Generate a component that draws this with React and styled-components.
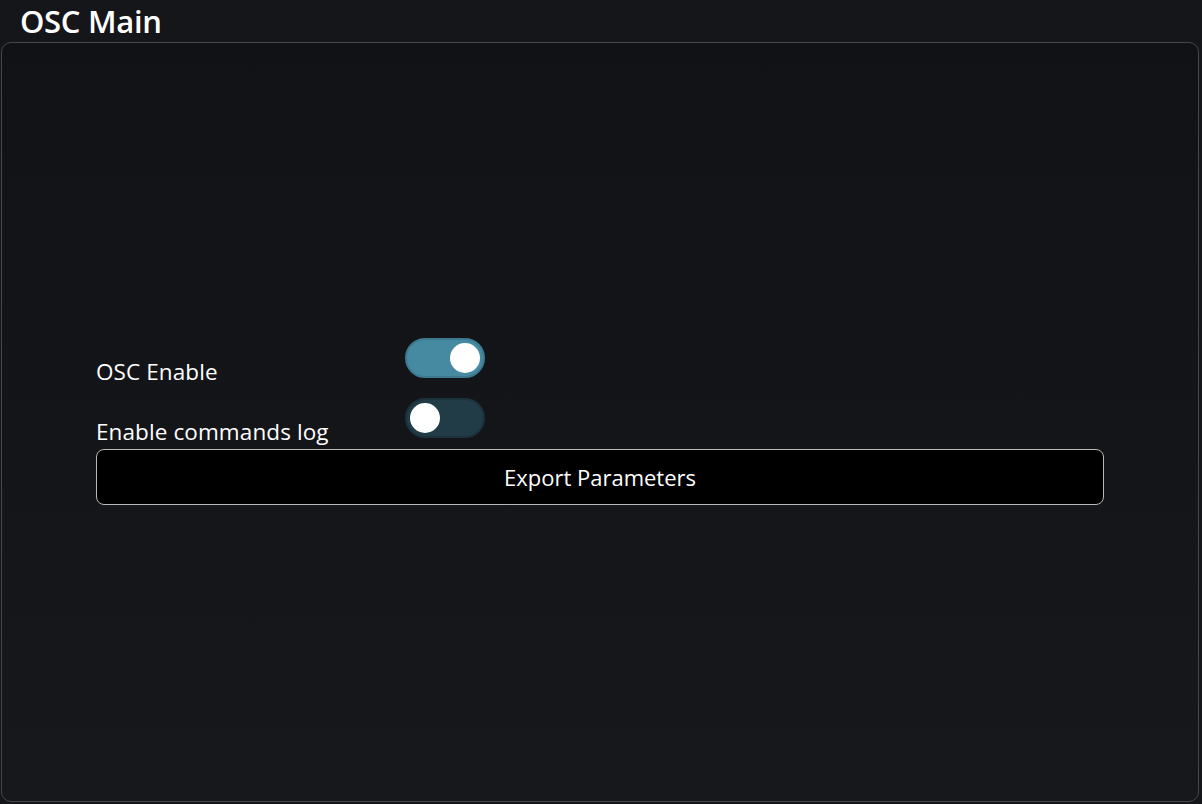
import React, { useState } from "react";
import styled, { createGlobalStyle } from "styled-components";

const GlobalStyle = createGlobalStyle`
  html, body {
    margin: 0;
    padding: 0;
    background: #15161a;
    font-family: "Open Sans", "Noto Sans", sans-serif;
    color: #ffffff;
  }
`;

const Page = styled.div`
  display: flex;
  flex-direction: column;
  width: 1202px;
  height: 804px;
  box-sizing: border-box;
  padding: 0 3px 2px 1px;
  background: #15161a;
`;

const Title = styled.h1`
  margin: 0;
  padding: 0 0 0 19px;
  height: 42px;
  line-height: 42px;
  font-size: 31px;
  font-weight: 600;
  letter-spacing: -0.3px;
`;

const Panel = styled.section`
  flex: 1;
  display: flex;
  flex-direction: column;
  justify-content: center;
  padding: 0 94px;
  border: 1px solid #46474b;
  border-radius: 10px;
  background: linear-gradient(180deg, #111216 0%, #17181c 100%);
`;

const Settings = styled.div`
  display: flex;
  flex-direction: column;
  margin-top: -2px;
`;

const Row = styled.div`
  display: flex;
  align-items: flex-start;
  height: 40px;
  margin-bottom: 20px;
  &:last-child {
    margin-bottom: 11px;
  }
`;

const Label = styled.span`
  width: 309px;
  font-size: 22.5px;
  line-height: 28px;
  padding-top: 20px;
  letter-spacing: 0.1px;
`;

const Track = styled.button`
  position: relative;
  width: 80px;
  height: 40px;
  padding: 0;
  border: 2px solid ${(p) => (p.$on ? "#3d7a90" : "#1b323b")};
  border-radius: 20px;
  background: ${(p) => (p.$on ? "#468aa1" : "#213c47")};
  cursor: pointer;
  box-sizing: border-box;
`;

const Knob = styled.span`
  position: absolute;
  top: 3px;
  left: ${(p) => (p.$on ? "43px" : "3px")};
  width: 30px;
  height: 30px;
  border-radius: 50%;
  background: #ffffff;
`;

const ExportButton = styled.button`
  height: 56px;
  border: 1px solid #b8b8b8;
  border-radius: 8px;
  background: #000000;
  color: #ffffff;
  font-family: "Open Sans", "Noto Sans", sans-serif;
  font-size: 22px;
  cursor: pointer;
`;

const Toggle = ({ on, onChange }) => (
  <Track $on={on} onClick={() => onChange(!on)}>
    <Knob $on={on} />
  </Track>
);

export default function App() {
  const [osc, setOsc] = useState(true);
  const [log, setLog] = useState(false);

  return (
    <Page>
      <GlobalStyle />
      <Title>OSC Main</Title>
      <Panel>
        <Settings>
          <Row>
            <Label>OSC Enable</Label>
            <Toggle on={osc} onChange={setOsc} />
          </Row>
          <Row>
            <Label>Enable commands log</Label>
            <Toggle on={log} onChange={setLog} />
          </Row>
        </Settings>
        <ExportButton>Export Parameters</ExportButton>
      </Panel>
    </Page>
  );
}
